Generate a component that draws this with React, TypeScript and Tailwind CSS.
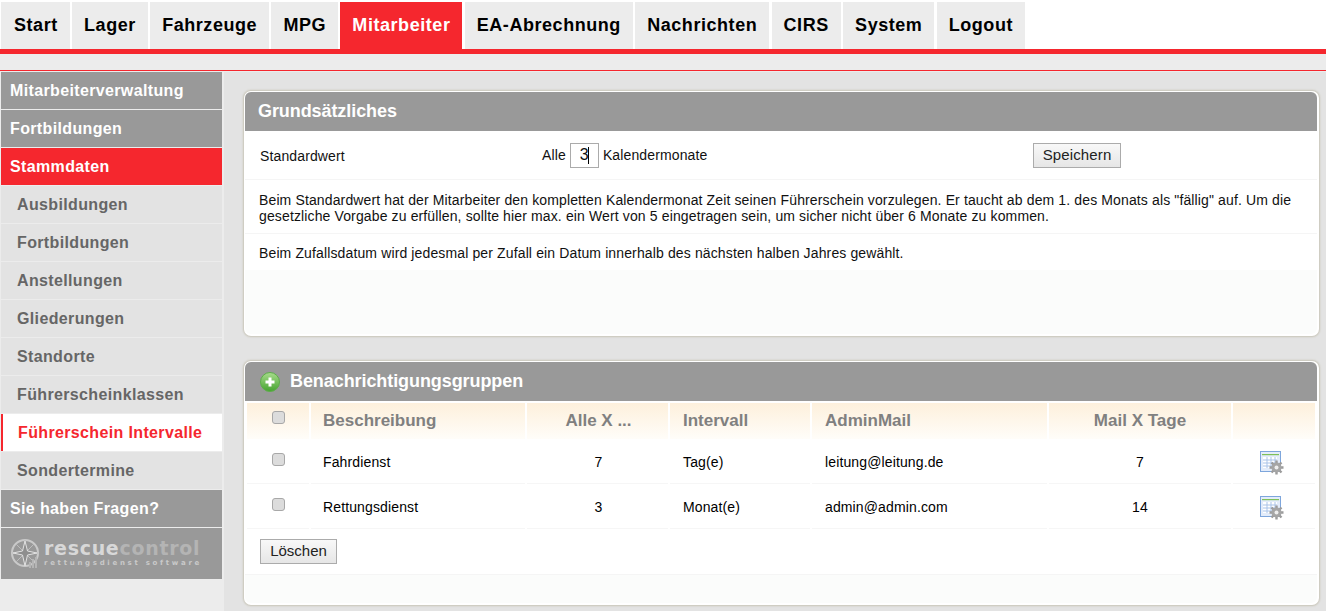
const tabs = ["Start","Lager","Fahrzeuge","MPG","Mitarbeiter","EA-Abrechnung","Nachrichten","CIRS","System","Logout"];
const side: [string, string][] = [
  ["Mitarbeiterverwaltung","g"],["Fortbildungen","g"],["Stammdaten","r"],
  ["Ausbildungen","s"],["Fortbildungen","s"],["Anstellungen","s"],["Gliederungen","s"],["Standorte","s"],["Führerscheinklassen","s"],
  ["Führerschein Intervalle","a"],["Sondertermine","s"],["Sie haben Fragen?","g"],
];

function GearIcon() {
  return (
    <svg width="24" height="24" viewBox="0 0 24 24">
      <rect x="0.5" y="0.5" width="20" height="20" fill="#e3ecfa" stroke="#7ea6dc" />
      <rect x="2" y="3" width="17" height="1.2" fill="#7fc05a" />
      <rect x="3" y="6" width="14" height="11" fill="#fff" />
      <path d="M3 9h14M3 12h14M3 15h14M7 6v11M11 6v11M15 6v11" stroke="#a9c3e8" strokeWidth="1" fill="none" />
      <g transform="translate(16.5 16.5)">
        <path d="M0-7v14M-7 0h14M-5-5l10 10M5-5l-10 10" stroke="#9b9b9b" strokeWidth="2.4" />
        <circle r="5" fill="#a5a5a5" />
        <circle r="2" fill="#eeeeee" />
      </g>
    </svg>
  );
}

function Logo() {
  return (
    <svg width="30" height="32" viewBox="0 0 30 32">
      <circle cx="15" cy="15" r="13" fill="none" stroke="#c9c9c9" strokeWidth="2" />
      <path d="M2 15h26M15 2v26M6 6l18 18M24 6L6 24" stroke="#bdbdbd" strokeWidth="1" />
      <path d="M15 3l2.5 10L27 15l-9.5 2L15 28l-2.5-11L3 15l9.500-2z" fill="#8e8e8e" stroke="#e2e2e2" strokeWidth="1" />
      <path d="M20 30v-6M23 30v-9M26 30v-11" stroke="#b5b5b5" strokeWidth="2" />
    </svg>
  );
}

function Checkbox() {
  return <span className="block w-[13px] h-[13px] rounded-[3px] border border-[#a8a8a8] bg-[#dcdcdc] mx-auto" />;
}

function PanelHeader({ children }: { children: React.ReactNode }) {
  return <div className="h-[39px] shrink-0 bg-[#999999] rounded-t-[6px] flex items-center pl-[13px] text-white font-bold text-[18px] tracking-[-0.08px] gap-[10px]">{children}</div>;
}

function Panel({ className, children }: { className: string; children: React.ReactNode }) {
  return <section className={`rounded-[7px] bg-white border-t border-l border-r-2 border-b-2 border-white shadow-[0_0_2px_1px_#c8c5b8] flex flex-col ${className}`}>{children}</section>;
}

const headCell = "bg-gradient-to-b from-[#fdf0dc] to-[#fffdf9] font-bold text-[17px] text-[#808080] h-[36px] p-0";
const cell = "text-[14px] tracking-[0.13px] text-black p-0 pt-[2px] border-b border-[#f6f6f6]";

function Row({ desc, x, iv, mail, days }: { desc: string; x: string; iv: string; mail: string; days: string }) {
  return (
    <tr className="h-[45px]">
      <td className={cell}><div className="-mt-[6px]"><Checkbox /></div></td>
      <td className={`${cell} pl-[12px]`}>{desc}</td>
      <td className={`${cell} text-center pl-[2px]`}>{x}</td>
      <td className={`${cell} pl-[13px]`}>{iv}</td>
      <td className={`${cell} pl-[13px]`}>{mail}</td>
      <td className={`${cell} text-center`}>{days}</td>
      <td className={cell}><div className="pl-[27px] pt-[1px]"><GearIcon /></div></td>
    </tr>
  );
}

function Btn({ children, className }: { children: React.ReactNode; className: string }) {
  return <button className={`h-[25px] border border-[#ababab] bg-gradient-to-b from-[#f8f8f8] to-[#e6e6e6] text-[15px] text-[#222] ${className}`}>{children}</button>;
}

export default function App() {
  return (
    <div className="w-[1326px] h-[611px] overflow-hidden bg-[#ececec] font-['Liberation_Sans',Arial,sans-serif] flex flex-col">
      <div className="bg-white pt-[2px] pl-[1px] h-[49px] flex gap-[2.3px] shrink-0">
        {tabs.map((t) => (
          <div key={t} className={`h-[47px] flex items-center pr-[12px] text-[18px] font-bold tracking-[0.55px] ${t === "Start" ? "pl-[13px]" : "pl-[12px]"} ${t === "Mitarbeiter" ? "bg-[#f5272e] text-white" : "bg-[#ececec] text-black"}`}>{t}</div>
        ))}
        <div className="flex-1" />
      </div>
      <div className="h-[5px] bg-[#f5272e] shrink-0" />
      <div className="h-[16px] shrink-0" />
      <div className="h-[1px] bg-[#f5272e] shrink-0" />
      <div className="flex flex-1 min-h-0 pt-[1px]">
        <aside className="w-[224px] pl-[1px] pr-[2px] shrink-0">
          {side.map(([t, k]) => (
            <div key={t + k} className={`h-[37px] mb-[1px] flex items-center font-bold text-[16px] tracking-[0.36px] ${
              k === "g" ? "bg-[#999999] text-white pl-[9px]" :
              k === "r" ? "bg-[#f5272e] text-white pl-[9px]" :
              k === "a" ? "bg-white text-[#f5272e] pl-[15px] border-l-2 border-[#f5272e]" :
              "bg-[#e3e3e3] text-[#666666] pl-[16px]"}`}>{t}</div>
          ))}
          <div className="h-[51px] bg-[#999999] flex items-center pl-[9px] gap-[4px]">
            <Logo />
            <div className="leading-none -mt-[3px]">
              <div className="font-['DejaVu_Sans',sans-serif] font-bold text-[19px] leading-[22px] text-[#d8d8d8] tracking-[0.7px]">rescue<span className="text-[#b4b4b4]">control</span></div>
              <div className="font-['DejaVu_Sans',sans-serif] text-[7px] font-bold leading-[8px] text-[#c9c9c9] tracking-[2.7px]">rettungsdienst software</div>
            </div>
          </div>
        </aside>
        <main className="flex-1 min-w-0 bg-[#e3e3e3] pl-[20px] pr-[7px] pt-[19px]">
          <Panel className="h-[245px]">
            <PanelHeader>Grundsätzliches</PanelHeader>
            <div className="h-[49px] flex items-center border-b border-[#f5f5f5] text-[14px] tracking-[0.13px] text-[#111] shrink-0">
              <div className="w-[295px] pl-[15px] pt-[3px]">Standardwert</div>
              <div className="w-[493px] flex items-center pl-[2px]">
                <span className="pt-[1px]">Alle</span>
                <span className="mx-[4px] w-[29px] h-[25px] border border-[#ababab] flex items-center justify-center text-[16px]">
                  3<span className="w-[1px] h-[17px] bg-black -ml-[1px]" />
                </span>
                <span className="pt-[1px]">Kalendermonate</span>
              </div>
              <Btn className="w-[88px]">Speichern</Btn>
            </div>
            <div className="h-[54px] pt-[12px] pl-[14px] pr-[14px] text-[14px] tracking-[0.13px] leading-[16px] text-[#111] border-b border-[#f5f5f5] shrink-0">
              Beim Standardwert hat der Mitarbeiter den kompletten Kalendermonat Zeit seinen Führerschein vorzulegen. Er taucht ab dem 1. des Monats als "fällig" auf. Um die gesetzliche Vorgabe zu erfüllen, sollte hier max. ein Wert von 5 eingetragen sein, um sicher nicht über 6 Monate zu kommen.
            </div>
            <div className="h-[36px] flex items-center pl-[14px] pt-[2px] text-[14px] tracking-[0.13px] text-[#111] shrink-0">
              Beim Zufallsdatum wird jedesmal per Zufall ein Datum innerhalb des nächsten halben Jahres gewählt.
            </div>
            <div className="flex-1 bg-[#fbfcfb] rounded-b-[6px]" />
          </Panel>
          <Panel className="h-[244px] mt-[25px]">
            <PanelHeader>
              <svg width="20" height="20" viewBox="0 0 20 20" className="ml-[2px]">
                <defs>
                  <linearGradient id="gp" x1="0" y1="0" x2="0" y2="1">
                    <stop offset="0" stopColor="#a8dc8c" />
                    <stop offset="1" stopColor="#45a32f" />
                  </linearGradient>
                </defs>
                <circle cx="10" cy="10" r="9.500" fill="url(#gp)" stroke="#5dae4a" />
                <path d="M10 5.500v9M5.500 10h9" stroke="#fff" strokeWidth="3" />
              </svg>
              Benachrichtigungsgruppen
            </PanelHeader>
            <div className="pt-[2px]">
              <table className="w-full table-fixed border-separate border-spacing-x-[2px] border-spacing-y-0">
                <colgroup>
                  <col className="w-[62px]" />
                  <col className="w-[214px]" />
                  <col className="w-[141px]" />
                  <col className="w-[140px]" />
                  <col className="w-[235px]" />
                  <col className="w-[182px]" />
                  <col className="w-[82px]" />
                </colgroup>
                <thead>
                  <tr>
                    <th className={headCell}><div className="-mt-[8px]"><Checkbox /></div></th>
                    <th className={`${headCell} text-left pl-[12px]`}>Beschreibung</th>
                    <th className={`${headCell} pl-[2px]`}>Alle X ...</th>
                    <th className={`${headCell} text-left pl-[13px]`}>Intervall</th>
                    <th className={`${headCell} text-left pl-[13px]`}>AdminMail</th>
                    <th className={headCell}>Mail X Tage</th>
                    <th className={headCell}></th>
                  </tr>
                </thead>
                <tbody>
                  <Row desc="Fahrdienst" x="7" iv="Tag(e)" mail="leitung@leitung.de" days="7" />
                  <Row desc="Rettungsdienst" x="3" iv="Monat(e)" mail="admin@admin.com" days="14" />
                </tbody>
              </table>
            </div>
            <div className="pl-[15px] pt-[10px] pb-[10px] border-b border-[#f5f5f5]">
              <Btn className="w-[77px]">Löschen</Btn>
            </div>
            <div className="flex-1 bg-[#fbfcfb] rounded-b-[6px]" />
          </Panel>
        </main>
      </div>
    </div>
  );
}
